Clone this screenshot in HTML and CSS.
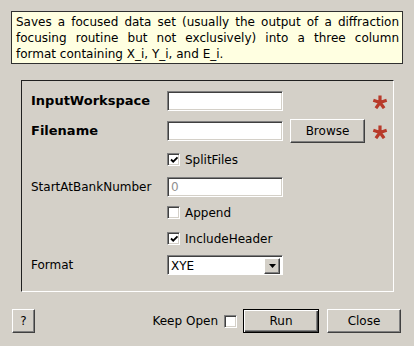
FILE: index.html
```html
<!DOCTYPE html>
<html lang="en">
<head>
  <meta charset="UTF-8">
  <title>SaveFocusedXYE</title>
  <link rel="stylesheet" href="styles.css">
</head>
<body>
  <div class="tip">
    <div class="tip-line">Saves a focused data set (usually the output of a diffraction</div>
    <div class="tip-line">focusing routine but not exclusively) into a three column</div>
    <div class="tip-line last">format containing X_i, Y_i, and E_i.</div>
  </div>

  <div class="props">
    <label class="prop-label bold">InputWorkspace</label>
    <input class="field" type="text">
    <span></span>
    <svg class="star" viewBox="0 0 16 14"><path d="M8 7.5V0.5M8 7.5L14.7 5.3M8 7.5L12.1 13.2M8 7.5L3.9 13.2M8 7.5L1.3 5.3"/></svg>

    <label class="prop-label bold">Filename</label>
    <input class="field" type="text">
    <button class="btn browse">Browse</button>
    <svg class="star" viewBox="0 0 16 14"><path d="M8 7.5V0.5M8 7.5L14.7 5.3M8 7.5L12.1 13.2M8 7.5L3.9 13.2M8 7.5L1.3 5.3"/></svg>

    <span></span>
    <div class="check-row"><span class="check on"><svg viewBox="0 0 9 9"><path d="M1 3.5L3.2 5.7L7.5 1.4"/></svg></span>SplitFiles</div>
    <span></span><span></span>

    <label class="prop-label">StartAtBankNumber</label>
    <input class="field" type="text" placeholder="0">
    <span></span><span></span>

    <span></span>
    <div class="check-row"><span class="check"></span>Append</div>
    <span></span><span></span>

    <span></span>
    <div class="check-row"><span class="check on"><svg viewBox="0 0 9 9"><path d="M1 3.5L3.2 5.7L7.5 1.4"/></svg></span>IncludeHeader</div>
    <span></span><span></span>

    <label class="prop-label">Format</label>
    <div class="combo">
      <span class="combo-text">XYE</span>
      <span class="combo-arrow"><svg viewBox="0 0 7 4"><path d="M0 0H7L3.5 4Z"/></svg></span>
    </div>
    <span></span><span></span>
  </div>

  <div class="actions">
    <button class="btn help">?</button>
    <span class="keep">Keep Open</span>
    <span class="check keep-box"></span>
    <button class="btn run">Run</button>
    <button class="btn close">Close</button>
  </div>
</body>
</html>
```

FILE: styles.css
```css
body {
  margin: 0;
  background: #d4d0c8;
  font-family: "DejaVu Sans", Verdana, sans-serif;
  font-size: 12px;
  color: #000;
}
.tip {
  margin: 11px 0 0 11px;
  width: 392px;
  box-sizing: border-box;
  padding: 2px 3px 1px 4px;
  background: #ffffe1;
  border: 1px solid #303030;
  line-height: 16px;
}
.tip-line {
  text-align: justify;
  text-align-last: justify;
  white-space: nowrap;
}
.tip-line.last {
  text-align-last: left;
}
.props {
  margin: 16px 0 0 21px;
  width: 373px;
  box-sizing: border-box;
  padding: 4px 0 12px 9px;
  border: 1px solid;
  border-color: #202020 #fff #fff #202020;
  display: grid;
  grid-template-columns: 136px 116px 82px 23px;
  grid-template-rows: 31px 29px 29px 25px 27px 25px 28px;
  align-items: center;
}
.prop-label {
  white-space: nowrap;
  color: #000;
}
.bold {
  font-weight: bold;
  font-size: 13px;
}
.field {
  width: 116px;
  height: 20px;
  box-sizing: border-box;
  margin: 0;
  padding: 0 3px;
  font: inherit;
  background: #fff;
  border: 1px solid;
  border-color: #808080 #fff #fff #808080;
  box-shadow: inset 1px 1px #404040, inset -1px -1px #d4d0c8;
  outline: none;
}
.field::placeholder {
  color: #909090;
}
.btn {
  margin: 0;
  padding: 0;
  height: 24px;
  box-sizing: border-box;
  font: inherit;
  color: #000;
  background: #d4d0c8;
  border: 1px solid;
  border-color: #fff #404040 #404040 #fff;
  box-shadow: inset -1px -1px #808080;
}
.browse {
  width: 75px;
  justify-self: end;
}
.star {
  width: 16px;
  height: 14px;
  justify-self: end;
  margin-top: 3px;
}
.star path {
  fill: none;
  stroke: #b83a2a;
  stroke-width: 3.2;
}
.check-row {
  display: flex;
  align-items: center;
  gap: 5px;
  white-space: nowrap;
}
.check {
  width: 13px;
  height: 13px;
  box-sizing: border-box;
  flex: none;
  background: #fff;
  border: 1px solid;
  border-color: #808080 #fff #fff #808080;
  box-shadow: inset 1px 1px #404040, inset -1px -1px #d4d0c8;
  display: flex;
  align-items: center;
  justify-content: center;
}
.check svg {
  width: 9px;
  height: 9px;
  margin: 1px 0 0 1px;
}
.check path {
  fill: none;
  stroke: #000;
  stroke-width: 1.8;
}
.combo {
  width: 116px;
  height: 20px;
  box-sizing: border-box;
  display: flex;
  align-items: center;
  background: #fff;
  border: 1px solid;
  border-color: #808080 #fff #fff #808080;
  box-shadow: inset 1px 1px #404040;
  padding: 2px 2px 1px 3px;
}
.combo-text {
  flex: 1;
}
.combo-arrow {
  width: 16px;
  height: 16px;
  box-sizing: border-box;
  background: #d4d0c8;
  border: 1px solid;
  border-color: #fff #404040 #404040 #fff;
  box-shadow: inset -1px -1px #808080;
  display: flex;
  align-items: center;
  justify-content: center;
}
.combo-arrow svg {
  width: 7px;
  height: 4px;
}
.actions {
  margin-top: 17px;
  padding: 0 13px 0 12px;
  display: flex;
  align-items: center;
}
.help {
  width: 23px;
}
.keep {
  margin-left: auto;
}
.keep-box {
  margin-left: 6px;
}
.run {
  width: 76px;
  margin-left: 6px;
  border: 1px solid #000;
  box-shadow: inset 1px 1px #fff, inset -1px -1px #404040, inset -2px -2px #808080;
}
.close {
  width: 74px;
  margin-left: 8px;
}
```
